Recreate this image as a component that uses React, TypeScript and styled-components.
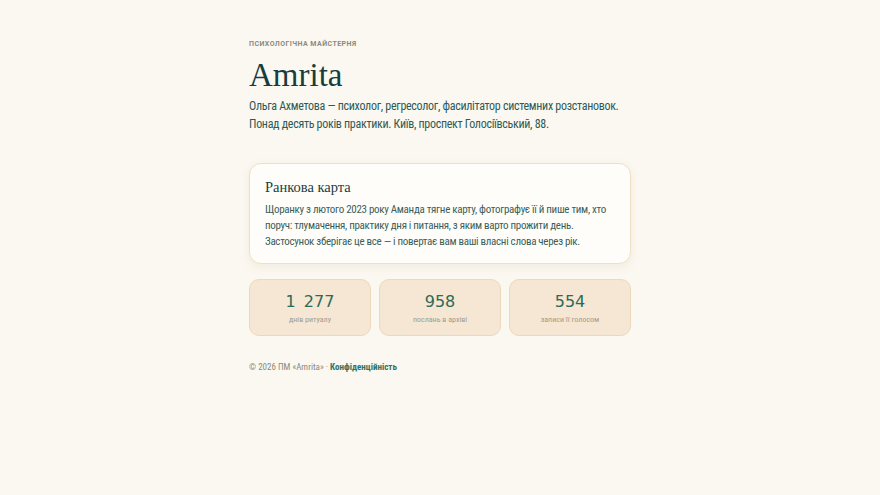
import React from 'react';
import styled, { createGlobalStyle } from 'styled-components';

const GlobalStyle = createGlobalStyle`
    html, body {
        margin: 0;
        padding: 0;
        background: #fbf8f1;
    }
    body {
        font-family: 'Liberation Sans Narrow', 'Roboto Condensed', Roboto, sans-serif;
        color: #2f5a55;
    }
`;

const stats = [
    { value: '1 277', label: 'днів ритуалу' },
    { value: '958', label: 'послань в архіві' },
    { value: '554', label: 'записи її голосом' },
];

const App: React.FC = () => {
    return (
        <Page>
            <GlobalStyle />
            <Column>
                <Eyebrow>Психологічна майстерня</Eyebrow>
                <Title>Amrita</Title>
                <Lead>
                    Ольга Ахметова — психолог, регресолог, фасилітатор системних
                    розстановок.
                    <br />
                    Понад десять років практики. Київ, проспект Голосіївський, 88.
                </Lead>

                <Card>
                    <CardTitle>Ранкова карта</CardTitle>
                    <CardText>
                        Щоранку з лютого 2023 року Аманда тягне карту, фотографує її й
                        пише тим, хто поруч: тлумачення, практику дня і питання, з яким
                        варто прожити день.
                        <br />
                        Застосунок зберігає це все — і повертає вам ваші власні слова
                        через рік.
                    </CardText>
                </Card>

                <Stats>
                    {stats.map((s) => (
                        <Stat key={s.label}>
                            <StatValue>{s.value}</StatValue>
                            <StatLabel>{s.label}</StatLabel>
                        </Stat>
                    ))}
                </Stats>

                <Footer>
                    © 2026 ПМ «Amrita» · <FooterLink href="#">Конфіденційність</FooterLink>
                </Footer>
            </Column>
        </Page>
    );
};

const Page = styled.div`
    min-height: 495px;
    display: flex;
    justify-content: center;
`;

const Column = styled.main`
    width: 382px;
    padding-top: 39px;
    display: flex;
    flex-direction: column;
`;

const Eyebrow = styled.div`
    font-family: Roboto, sans-serif;
    font-size: 7px;
    font-weight: 700;
    letter-spacing: 0.45px;
    text-transform: uppercase;
    color: #8a8a7c;
    line-height: 10px;
`;

const Title = styled.h1`
    margin: 6px 0 0;
    font-family: 'Liberation Serif', 'DejaVu Serif', serif;
    font-weight: 400;
    font-size: 33px;
    line-height: 40px;
    color: #173d3f;
`;

const Lead = styled.p`
    margin: 2px 0 0;
    font-size: 12px;
    letter-spacing: -0.3px;
    line-height: 18px;
    color: #2f5a55;
`;

const Card = styled.section`
    margin-top: 30px;
    padding: 13px 15px 13px;
    background: #fffdf9;
    border: 1px solid #efe0c4;
    border-radius: 12px;
    box-shadow: 0 3px 10px rgba(180, 150, 100, 0.12);
`;

const CardTitle = styled.h2`
    margin: 0;
    font-family: 'Liberation Serif', 'DejaVu Serif', serif;
    font-weight: 400;
    font-size: 14.5px;
    line-height: 20px;
    color: #173d3f;
`;

const CardText = styled.p`
    margin: 5px 0 0;
    font-size: 11px;
    letter-spacing: -0.3px;
    line-height: 16px;
    color: #3a5f5b;
`;

const Stats = styled.div`
    margin-top: 15px;
    display: grid;
    grid-template-columns: repeat(3, 1fr);
    gap: 8px;
`;

const Stat = styled.div`
    height: 55px;
    display: flex;
    flex-direction: column;
    align-items: center;
    justify-content: center;
    background: #f5e7d3;
    border: 1px solid #ecd9bb;
    border-radius: 10px;
`;

const StatValue = styled.div`
    font-family: 'DejaVu Sans', sans-serif;
    font-size: 16px;
    line-height: 20px;
    color: #2d6a57;
    word-spacing: 3px;
`;

const StatLabel = styled.div`
    margin-top: 3px;
    font-size: 8px;
    line-height: 9px;
    color: #a09c8e;
`;

const Footer = styled.footer`
    margin-top: 25px;
    font-size: 9px;
    line-height: 12px;
    color: #8a8a7c;
`;

const FooterLink = styled.a`
    color: #2f7260;
    font-weight: 700;
    text-decoration: none;
`;

export default App;
